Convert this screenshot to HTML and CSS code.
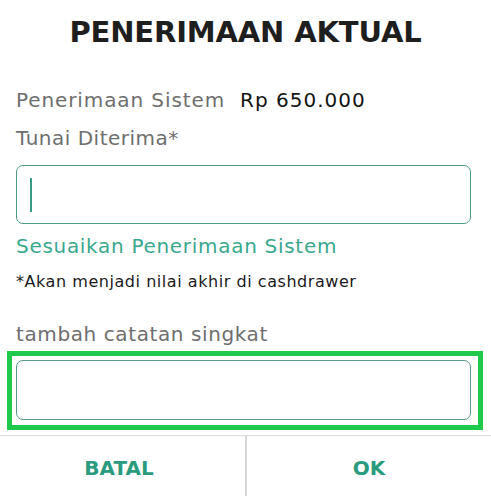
FILE: index.html
```html
<!DOCTYPE html>
<html>
<head>
<meta charset="utf-8">
<link rel="stylesheet" href="styles.css">
</head>
<body>
<div class="dialog">
  <h1 class="title">PENERIMAAN AKTUAL</h1>
  <div class="content">
    <div class="row-system">
      <span class="label label-system">Penerimaan Sistem</span>
      <span class="amount">Rp 650.000</span>
    </div>
    <div class="label label-cash">Tunai Diterima*</div>
    <div class="input input-cash"><span class="cursor"></span></div>
    <div class="link">Sesuaikan Penerimaan Sistem</div>
    <div class="note">*Akan menjadi nilai akhir di cashdrawer</div>
    <div class="label label-note">tambah catatan singkat</div>
  </div>
  <div class="highlight">
    <div class="input input-note"></div>
  </div>
  <div class="actions">
    <div class="btn btn-cancel">BATAL</div>
    <div class="btn btn-ok">OK</div>
  </div>
</div>
</body>
</html>
```
FILE: styles.css
```css
html, body {
  margin: 0;
  padding: 0;
  background: #ffffff;
}
.dialog {
  width: 491px;
  height: 496px;
  display: flex;
  flex-direction: column;
  font-family: "DejaVu Sans", "Noto Sans", sans-serif;
}
.title {
  margin: 0;
  padding-top: 14px;
  height: 36px;
  font-size: 29px;
  line-height: 36px;
  font-weight: bold;
  color: #1e1e1e;
  text-align: center;
  letter-spacing: -0.15px;
}
.content {
  padding: 0 20px 0 16px;
  display: flex;
  flex-direction: column;
}
.row-system {
  margin-top: 38px;
  display: flex;
  align-items: baseline;
  gap: 15px;
  line-height: 24px;
}
.label {
  font-size: 20px;
  line-height: 24px;
  color: #6e6e6e;
}
.label-system {
  letter-spacing: 0.9px;
}
.amount {
  font-size: 20px;
  letter-spacing: 1px;
  color: #141414;
}
.label-cash {
  margin-top: 14px;
  letter-spacing: 0.5px;
}
.input {
  box-sizing: border-box;
  height: 59px;
  border: 1.5px solid #4a9a86;
  border-radius: 7px;
  background: #fff;
}
.input-cash {
  margin-top: 15px;
  display: flex;
  align-items: center;
  padding-left: 13px;
}
.cursor {
  width: 2px;
  height: 34px;
  background: #3a9a83;
}
.link {
  margin-top: 10px;
  font-size: 20px;
  line-height: 24px;
  letter-spacing: 0.7px;
  color: #3aa88d;
}
.note {
  margin-top: 14px;
  font-size: 16px;
  line-height: 20px;
  letter-spacing: 0.55px;
  color: #1a1a1a;
}
.label-note {
  margin-top: 31px;
  font-size: 20px;
  letter-spacing: 0.6px;
  line-height: 22px;
}
.highlight {
  margin: 6px 8px 0 7px;
  border: 5px solid #1fc94b;
  padding: 4px 7px 5px 4px;
}
.input-note {
  height: 60px;
  border-color: #5a9a8c;
}
.actions {
  margin-top: 5px;
  flex: 1;
  display: grid;
  grid-template-columns: 245px 1fr;
  border-top: 1px solid #dcdcdc;
}
.btn {
  display: flex;
  align-items: center;
  justify-content: center;
  font-size: 20px;
  font-weight: bold;
  color: #2b9b80;
  padding-top: 4px;
}
.btn-cancel {
  padding-right: 7px;
}
.btn + .btn {
  border-left: 2px solid #d6d6d6;
}
```
